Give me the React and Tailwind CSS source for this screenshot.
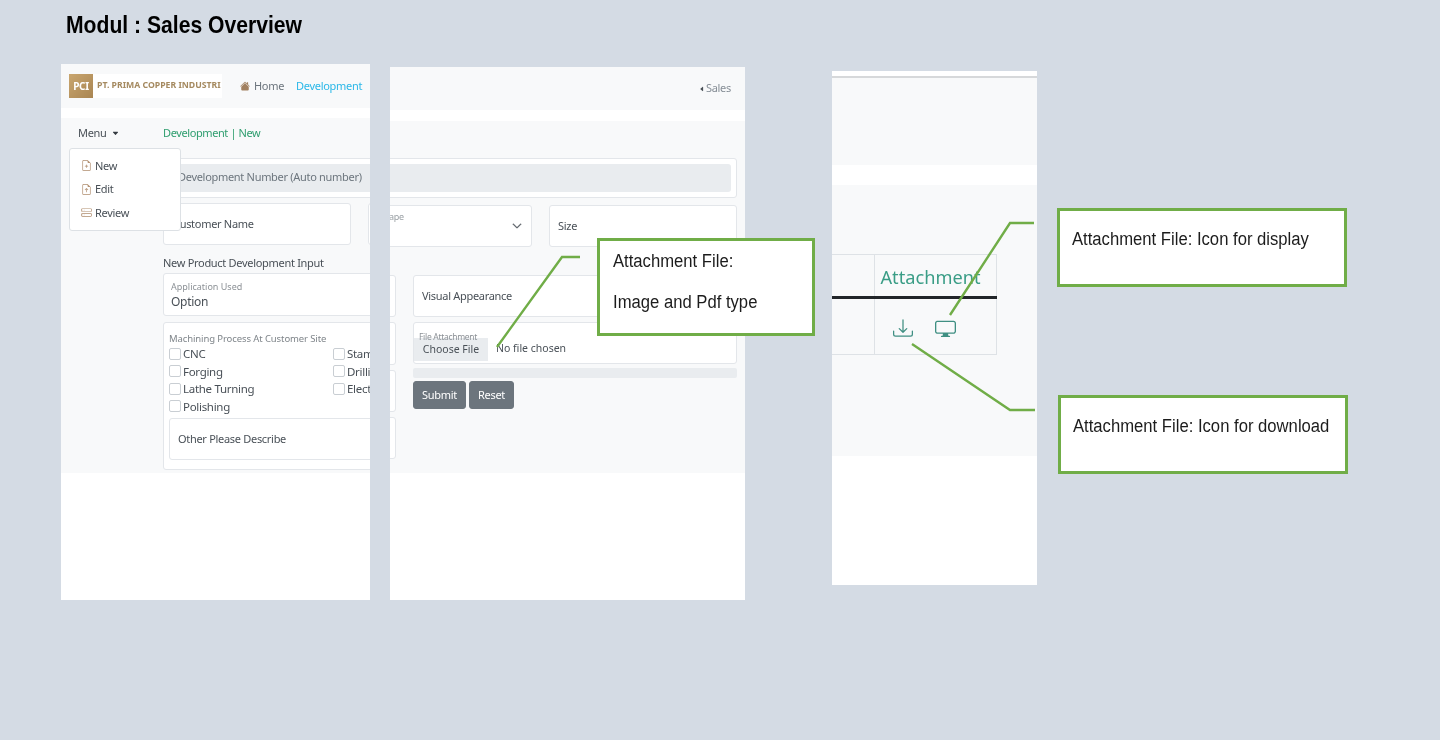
import {
  BsCaretDownFill,
  BsCaretLeftFill,
  BsChevronDown,
  BsDisplay,
  BsDownload,
  BsFileEarmarkArrowUp,
  BsFileEarmarkPlus,
  BsHddStack,
  BsHouseFill,
} from "react-icons/bs";

const bodyFont = "font-['Noto_Sans',sans-serif]";
const noteFont = "font-['Liberation_Sans',Arial,sans-serif]";

function Check({ label }) {
  return (
    <label className="flex h-[17.5px] items-center gap-[2px] text-[11.5px] whitespace-nowrap text-[#495057]">
      <span className="h-[12px] w-[12px] shrink-0 rounded-[2px] border border-[#c9ced3] bg-white" />
      {label}
    </label>
  );
}

function Card({ className = "", children }) {
  return <div className={`rounded-[3px] border border-[#e3e6ea] bg-white ${className}`}>{children}</div>;
}

function MenuItem({ icon, label }) {
  return (
    <div className="flex h-[23.5px] items-center gap-[4px] pl-[11px] text-[11px] text-[#495057]">
      <span className="w-[10px] text-[#b08d6e]">{icon}</span>
      {label}
    </div>
  );
}

function LeftPanel() {
  return (
    <div className="absolute top-[64px] left-[61px] flex h-[536px] w-[309px] flex-col overflow-hidden bg-white tracking-[-0.3px] blur-[0.35px]">
      <div className="flex h-[44px] shrink-0 items-center bg-[#f8f9fa] pl-[8px]">
        <div className="flex h-[24px] w-[153px] items-center bg-white">
          <div className="flex h-[24px] w-[24px] items-center justify-center bg-gradient-to-br from-[#c9a66f] to-[#a98552] text-[10px] font-bold text-white">
            PCI
          </div>
          <span className="ml-[4px] text-[8.7px] font-bold tracking-normal whitespace-nowrap text-[#a58a60]">PT. PRIMA COPPER INDUSTRI</span>
        </div>
        <BsHouseFill className="ml-[18px] text-[10px] text-[#a1805f]" />
        <span className="ml-[4px] text-[11px] text-[#6c757d]">Home</span>
        <span className="ml-[12px] text-[11px] text-[#2bb8e8]">Development</span>
      </div>
      <div className="h-[10px] shrink-0" />
      <div className="relative flex h-[355px] shrink-0 bg-[#f8f9fa]">
        <div className="w-[102px] shrink-0 pt-[7px] pl-[17px] text-[11px] text-[#495057]">
          <div className="flex items-center gap-[5px]">
            Menu <BsCaretDownFill className="text-[7px] text-[#343a40]" />
          </div>
        </div>
        <div className="absolute top-[30px] left-[8px] z-10 h-[83px] w-[112px] rounded-[3px] border border-[#dde1e5] bg-white py-[5px]">
          <MenuItem icon={<BsFileEarmarkPlus />} label="New" />
          <MenuItem icon={<BsFileEarmarkArrowUp />} label="Edit" />
          <MenuItem icon={<BsHddStack />} label="Review" />
        </div>
        <div className="w-[240px] shrink-0">
          <div className="flex h-[38px] items-start pt-[7px] text-[11px] tracking-[-0.4px] text-[#2f9e6f]">Development | New</div>
          <div className="h-[2px]" />
          <Card className="flex h-[40px] w-[400px] items-center px-[5px]">
            <div className="flex h-[28px] w-full items-center rounded-[3px] bg-[#e9ecef] pb-[1px] pl-[9px] text-[11px] whitespace-nowrap text-[#6c757d]">
              Development Number (Auto number)
            </div>
          </Card>
          <div className="mt-[5px] flex gap-[17px]">
            <Card className="flex h-[42px] w-[188px] shrink-0 items-center pl-[9px] text-[11px] text-[#495057]">Customer Name</Card>
            <Card className="h-[42px] w-[100px] shrink-0" />
          </div>
          <div className="mt-[10px] h-[16px] text-[11px] leading-[16px] whitespace-nowrap text-[#495057]">New Product Development Input</div>
          <Card className="mt-[2px] h-[43px] w-[233px] pt-[7px] pl-[7px]">
            <div className="text-[9px] leading-[12px] tracking-normal text-[#8c9196]">Application Used</div>
            <div className="mt-[1px] text-[12px] leading-[15px] text-[#495057]">Option</div>
          </Card>
          <Card className="mt-[6px] h-[148px] w-[233px] pt-[9px] pl-[5px]">
            <div className="text-[9.5px] leading-[13px] tracking-[-0.1px] text-[#7f858a]">Machining Process At Customer Site</div>
            <div className="grid w-[226px] grid-cols-[164px_62px] overflow-hidden">
              <div>
                <Check label="CNC" />
                <Check label="Forging" />
                <Check label="Lathe Turning" />
                <Check label="Polishing" />
              </div>
              <div>
                <Check label="Stamping" />
                <Check label="Drilling" />
                <Check label="Electrical" />
              </div>
            </div>
            <Card className="mt-[3px] flex h-[42px] w-[300px] items-center pl-[8px] text-[11px] text-[#495057]">Other Please Describe</Card>
          </Card>
        </div>
      </div>
    </div>
  );
}

function MiddlePanel() {
  return (
    <div className="absolute top-[67px] left-[390px] flex h-[533px] w-[355px] flex-col overflow-hidden bg-white tracking-[-0.3px] blur-[0.35px]">
      <div className="flex h-[43px] shrink-0 items-center justify-end gap-[1px] bg-[#f8f9fa] pr-[14px] text-[11px] text-[#868e96]">
        <BsCaretLeftFill className="text-[6px] text-[#495057]" />
        Sales
      </div>
      <div className="h-[11px] shrink-0" />
      <div className="h-[352px] shrink-0 bg-[#f8f9fa] pt-[37px]">
        <Card className="-ml-[10px] flex h-[40px] w-[357px] items-center pr-[5px]">
          <div className="h-[28px] w-full rounded-[3px] bg-[#e9ecef]" />
        </Card>
        <div className="mt-[7px] flex gap-[17px]">
          <Card className="relative -ml-[22px] h-[42px] w-[164px] shrink-0">
            <span className="absolute top-[4px] left-[10px] text-[9px] text-[#9aa0a5]">Shape</span>
            <BsChevronDown className="absolute top-[15px] right-[9px] stroke-current stroke-1 text-[10px] text-[#495057]" />
          </Card>
          <Card className="flex h-[42px] w-[188px] shrink-0 items-center pl-[8px] text-[11px] text-[#495057]">Size</Card>
        </div>
        <div className="mt-[28px] flex gap-[17px]">
          <div className="flex w-[6px] shrink-0 flex-col gap-[5px]">
            <Card className="-ml-[4px] h-[42px] w-[10px]" />
            <Card className="-ml-[4px] h-[43px] w-[10px]" />
            <Card className="-ml-[4px] h-[42px] w-[10px]" />
            <Card className="-ml-[4px] h-[42px] w-[10px]" />
          </div>
          <div className="w-[324px] shrink-0">
            <Card className="flex h-[42px] items-center pl-[8px] text-[11px] text-[#495057]">Visual Appearance</Card>
            <Card className="relative mt-[5px] h-[42px]">
              <span className="absolute top-[9px] left-[5px] text-[8.5px] leading-[10px] text-[#8c9196]">File Attachment</span>
              <div className="flex h-full items-end pb-[2px] text-[10.5px] tracking-normal text-[#495057]">
                <span className="flex h-[23px] w-[74px] items-center justify-center bg-[#e9ecef]">Choose File</span>
                <span className="mb-[4px] ml-[8px]">No file chosen</span>
              </div>
            </Card>
            <div className="mt-[4px] h-[10px] rounded-[2px] bg-[#e9ecef]" />
            <div className="mt-[3px] flex gap-[3px]">
              <button className="h-[28px] w-[53px] rounded-[3px] border border-[#6c757d] bg-[#6c757d] text-[11px] text-white">Submit</button>
              <button className="h-[28px] w-[45px] rounded-[3px] border border-[#6c757d] bg-[#6c757d] text-[11px] text-white">Reset</button>
            </div>
          </div>
        </div>
      </div>
    </div>
  );
}

function RightPanel() {
  return (
    <div className="absolute top-[71px] left-[832px] flex h-[514px] w-[205px] flex-col overflow-hidden bg-white blur-[0.35px]">
      <div className="mt-[5px] h-[2px] shrink-0 bg-[#d6d8da]" />
      <div className="h-[87px] shrink-0 bg-[#f8f9fa]" />
      <div className="h-[20px] shrink-0" />
      <div className="h-[271px] shrink-0 bg-[#f8f9fa] pt-[69px]">
        <table className="w-[165px] table-fixed border-collapse">
          <thead>
            <tr className="h-[43px]">
              <th className="w-[42px] border border-l-0 border-[#dee2e6] border-b-[3px] border-b-[#212529]" />
              <th className="border border-[#dee2e6] border-b-[3px] border-b-[#212529] pt-[4px] pl-[6px] text-left text-[18.2px] font-normal whitespace-nowrap text-[#3a9d86]">
                Attachment
              </th>
            </tr>
          </thead>
          <tbody>
            <tr className="h-[57px]">
              <td className="border border-l-0 border-[#dee2e6]" />
              <td className="border border-[#dee2e6] pt-[3px]">
                <div className="flex items-center gap-[22px] pl-[18px] text-[#3f8f82]">
                  <BsDownload className="text-[20px]" />
                  <BsDisplay className="text-[21px]" />
                </div>
              </td>
            </tr>
          </tbody>
        </table>
      </div>
    </div>
  );
}

function Note({ className, children }) {
  return (
    <div className={`absolute border-[3px] border-[#70ad47] bg-white ${noteFont} text-[18px] text-[#1c1c1c] ${className}`}>
      {children}
    </div>
  );
}

function NoteLine({ className = "", children }) {
  return <p className={`origin-left scale-x-[0.925] leading-[26px] whitespace-nowrap ${className}`}>{children}</p>;
}

export default function App() {
  return (
    <div className={`relative h-[740px] w-[1440px] overflow-hidden bg-[#d4dbe4] ${bodyFont}`}>
      <h1 className={`origin-left scale-x-[0.88] pt-[10px] pl-[75px] ${noteFont} text-[24px] leading-[30px] font-bold text-black`}>
        Modul : Sales Overview
      </h1>

      <LeftPanel />
      <MiddlePanel />
      <RightPanel />

      <Note className="top-[238px] left-[597px] h-[98px] w-[218px] pt-[7px] pl-[13px]">
        <NoteLine>Attachment File:</NoteLine>
        <NoteLine className="mt-[15px]">Image and Pdf type</NoteLine>
      </Note>
      <Note className="top-[208px] left-[1057px] h-[79px] w-[290px] pt-[15px] pl-[12px]">
        <NoteLine>Attachment File: Icon for display</NoteLine>
      </Note>
      <Note className="top-[395px] left-[1058px] h-[79px] w-[290px] pt-[15px] pl-[12px]">
        <NoteLine>Attachment File: Icon for download</NoteLine>
      </Note>

      <svg className="absolute inset-0 h-[740px] w-[1440px]" viewBox="0 0 1440 740" fill="none" stroke="#70ad47" strokeWidth="2.4">
        <polyline points="580,257 562,257 497,347" />
        <polyline points="1034,223 1010,223 950,315" />
        <polyline points="912,344 1010,410 1035,410" />
      </svg>
    </div>
  );
}
